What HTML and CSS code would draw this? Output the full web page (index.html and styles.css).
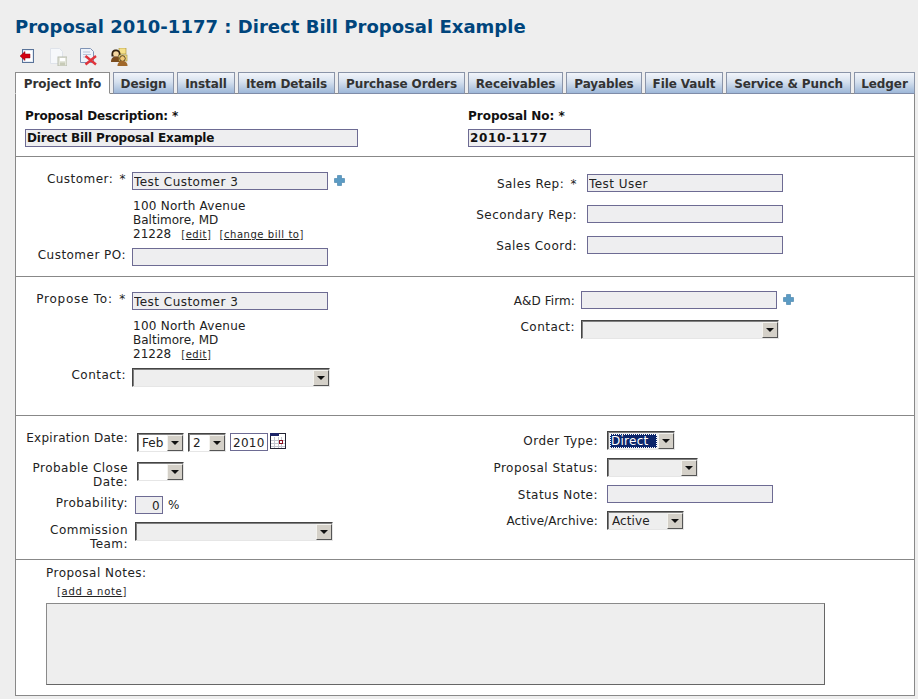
FILE: index.html
```html
<!DOCTYPE html>
<html lang="en">
<head>
<meta charset="utf-8">
<title>Proposal 2010-1177</title>
<link rel="stylesheet" href="styles.css">
</head>
<body>
<div class="page">
  <h1 class="title">Proposal 2010-1177 : Direct Bill Proposal Example</h1>
  <div class="toolbar">
    <svg class="tool tool-back" viewBox="0 0 16 16" width="16" height="16"><rect x="3.5" y="1.5" width="11" height="13" fill="#e4ecf6" stroke="#5a7398"/><rect x="5" y="3" width="8" height="10" fill="#fff"/><path d="M1 8l5-4.500V6h5v4H6v2.500z" fill="#d40010" stroke="#8a0010" stroke-width=".5"/></svg>
    <svg class="tool tool-save" viewBox="0 0 18 18" width="18" height="18"><path d="M1.500 .5h9l3 3v12h-12z" fill="#f6f8fb" stroke="#dfe3ea"/><rect x="9" y="9" width="9" height="9" fill="#e4e6dc" stroke="#b8bcae"/><rect x="11" y="10" width="5" height="3" fill="#fff"/><rect x="11" y="14.500" width="5" height="3" fill="#c8cbb8"/></svg>
    <svg class="tool tool-del" viewBox="0 0 18 18" width="18" height="18"><path d="M.5 .5h10l3 3v11h-13z" fill="#eef3fa" stroke="#7f93b5"/><path d="M3 4h7M3 6.500h8M3 9h5" stroke="#b9c4d8"/><path d="M5.500 8l10.500 8.500M16 8L5.500 16.500" stroke="#e0343c" stroke-width="2.400"/></svg>
    <svg class="tool tool-people" viewBox="0 0 18 18" width="18" height="18"><rect x="9" y="0" width="7" height="6" fill="#f5e08a" stroke="#a08a30" stroke-width=".6"/><path d="M1.500 8.500C1 3 3 1.500 6 1.500s5 2 4.500 7z" fill="#33220f"/><circle cx="6" cy="6" r="2.800" fill="#f5d7a0"/><path d="M1 14c0-4 2-5.500 5-5.500s5 1.500 5 5.500z" fill="#7a4c1e"/><rect x="9" y="7" width="8" height="6" fill="#f5e08a" stroke="#a08a30" stroke-width=".6"/><circle cx="12.500" cy="10.500" r="2.800" fill="#f0c878" stroke="#33220f" stroke-width=".8"/><path d="M7.500 18c0-3.500 2-5 5-5s5 1.500 5 5z" fill="#a0682a"/></svg>
  </div>

  <nav class="tabs">
    <a class="tab tab-active">Project Info</a>
    <a class="tab">Design</a>
    <a class="tab">Install</a>
    <a class="tab">Item Details</a>
    <a class="tab">Purchase Orders</a>
    <a class="tab">Receivables</a>
    <a class="tab">Payables</a>
    <a class="tab">File Vault</a>
    <a class="tab">Service &amp; Punch</a>
    <a class="tab">Ledger</a>
  </nav>

  <main class="panel">
    <section class="sec sec-head">
      <div class="head-field head-desc">
        <label class="head-label head-label-tight">Proposal Description: *</label>
        <input class="input input-bold w-desc" value="Direct Bill Proposal Example" readonly>
      </div>
      <div class="head-field">
        <label class="head-label">Proposal No: *</label>
        <input class="input input-bold input-num w-no" value="2010-1177" readonly>
      </div>
    </section>

    <section class="sec sec-customer">
      <div class="form form-a">
        <label class="label">Customer: <span class="star">*</span></label>
        <div class="ctrl"><input class="input w-196" value="Test Customer 3" readonly><svg class="plus" viewBox="0 0 11 11" width="11" height="11"><path d="M3.500 .5h4v3h3v4h-3v3h-4v-3h-3v-4h3z" fill="#5b9bc4" stroke="#3f7ea8" stroke-width=".6"/></svg></div>
        <div class="address col2"><span class="addr-first">100 North Avenue</span><br>Baltimore, MD<br>21228<span class="links"><span class="lnk">[<u>edit</u>]</span><span class="lnk">[<u>change bill to</u>]</span></span></div>
        <label class="label">Customer PO:</label>
        <div class="ctrl"><input class="input w-196" readonly></div>
      </div>
      <div class="form form-b">
        <label class="label label-mid">Sales Rep: <span class="star">*</span></label>
        <div class="ctrl"><input class="input w-196" value="Test User" readonly></div>
        <label class="label label-mid">Secondary Rep:</label>
        <div class="ctrl"><input class="input w-196" readonly></div>
        <label class="label label-mid">Sales Coord:</label>
        <div class="ctrl"><input class="input w-196" readonly></div>
      </div>
    </section>

    <section class="sec sec-propose">
      <div class="form form-a">
        <label class="label label-wide">Propose To: <span class="star">*</span></label>
        <div class="ctrl"><input class="input w-196" value="Test Customer 3" readonly></div>
        <div class="address col2"><span class="addr-first">100 North Avenue</span><br>Baltimore, MD<br>21228<span class="links"><span class="lnk">[<u>edit</u>]</span></span></div>
        <label class="label">Contact:</label>
        <div class="ctrl"><div class="select w-198"><span class="select-value"></span><span class="select-btn"></span></div></div>
      </div>
      <div class="form form-c">
        <label class="label label-firm label-tight">A&amp;D Firm:</label>
        <div class="ctrl"><input class="input w-196" readonly><svg class="plus" viewBox="0 0 11 11" width="11" height="11"><path d="M3.500 .5h4v3h3v4h-3v3h-4v-3h-3v-4h3z" fill="#5b9bc4" stroke="#3f7ea8" stroke-width=".6"/></svg></div>
        <label class="label">Contact:</label>
        <div class="ctrl"><div class="select w-198"><span class="select-value"></span><span class="select-btn"></span></div></div>
      </div>
    </section>

    <section class="sec sec-dates">
      <div class="form form-d">
        <label class="label label-date">Expiration Date:</label>
        <div class="ctrl ctrl-date">
          <div class="select select-white w-47"><span class="select-value">Feb</span><span class="select-btn"></span></div>
          <div class="select select-white w-38"><span class="select-value">2</span><span class="select-btn"></span></div>
          <input class="input input-year" value="2010" readonly>
          <svg class="cal" viewBox="0 0 16 16" width="16" height="16"><rect width="16" height="16" fill="#fff"/><path d="M.5 16V.5H16M.5 15.500H16M15.500 0v16" stroke="#223" fill="none"/><path d="M1 7.500h14M1 10.500h14M1 13.500h14M4.500 4v11M8.500 4v11M11.500 4v11" stroke="#c4c6d0"/><rect x="0" y="0" width="9" height="3" fill="#1c2468"/><rect x="9.500" y="7.500" width="3" height="3" fill="#fff" stroke="#8a1020"/></svg>
        </div>
        <label class="label">Probable Close Date:</label>
        <div class="ctrl ctrl-close"><div class="select select-white w-47"><span class="select-value"></span><span class="select-btn"></span></div></div>
        <label class="label">Probability:</label>
        <div class="ctrl ctrl-prob"><input class="input input-prob" value="0" readonly><span class="unit">%</span></div>
        <label class="label label-comm">Commission Team:</label>
        <div class="ctrl ctrl-comm"><div class="select w-198"><span class="select-value"></span><span class="select-btn"></span></div></div>
      </div>
      <div class="form form-e">
        <label class="label label-mid">Order Type:</label>
        <div class="ctrl"><div class="select w-68"><span class="select-value select-focus">Direct</span><span class="select-btn"></span></div></div>
        <label class="label label-mid">Proposal Status:</label>
        <div class="ctrl"><div class="select w-91"><span class="select-value"></span><span class="select-btn"></span></div></div>
        <label class="label label-mid">Status Note:</label>
        <div class="ctrl"><input class="input w-166" readonly></div>
        <label class="label label-mid label-tight">Active/Archive:</label>
        <div class="ctrl"><div class="select w-77"><span class="select-value">Active</span><span class="select-btn"></span></div></div>
      </div>
    </section>

    <section class="sec-notes">
      <label class="notes-label">Proposal Notes:</label>
      <div class="notes-link"><span class="lnk">[<u>add a note</u>]</span></div>
      <textarea class="notes-box" readonly></textarea>
    </section>
  </main>
</div>
</body>
</html>
```
FILE: styles.css
```css
* { box-sizing: border-box; }
html, body { margin: 0; padding: 0; }
body {
  background: #eeeeee;
  color: #222;
  font-family: "DejaVu Sans", Verdana, sans-serif;
  font-size: 12px;
  line-height: 14px;
  letter-spacing: .47px;
  overflow: hidden;
}
.page { width: 918px; height: 699px; padding: 16px 3px 0 15px; }
.title {
  margin: 0;
  font-size: 18px;
  line-height: 22px;
  font-weight: bold;
  letter-spacing: .02px;
  color: #00457c;
}
.toolbar { display: flex; align-items: flex-start; height: 18px; margin-top: 10px; padding-left: 4px; }
.tool-save { margin-left: 14px; }
.tool-del { margin-left: 13px; }
.tool-people { margin-left: 12px; }

.tabs {
  display: grid;
  grid-template-columns: 95px 61px 58px 97px 127px 95px 76px 78px 125px 61px;
  column-gap: 3px;
  height: 22px;
  margin-top: 6px;
  margin-bottom: -1px;
}
.tab {
  display: block;
  height: 22px;
  padding-top: 4px;
  text-align: center;
  font-weight: bold;
  font-size: 12px;
  line-height: 14px;
  letter-spacing: -.1px;
  color: #333;
  white-space: nowrap;
  border: 1px solid #8a94a8;
  border-bottom-color: #7f8ca8;
  background: linear-gradient(#f2f5fa, #d5e0ee 45%, #9db7d8);
}
.tab-active {
  position: relative;
  background: #fff;
  border-color: #8c8c8c;
  border-bottom-color: #fff;
}

.panel { width: 900px; height: 603px; background: #fff; border: 1px solid #888; }
.sec { border-bottom: 1px solid #888; display: flex; }
.sec-head { height: 63px; padding: 15px 0 0 9px; }
.sec-customer { height: 120px; }
.sec-propose { height: 139px; }
.sec-dates { height: 144px; }

.head-field { display: flex; flex-direction: column; align-items: flex-start; gap: 6px; }
.head-desc { width: 443px; }
.head-label { font-weight: bold; color: #111; line-height: 14px; letter-spacing: 0; }
.head-label-tight { letter-spacing: -.13px; }

.input {
  display: block;
  height: 18px;
  padding: 1px 1px 0;
  border: 1px solid #6d6b93;
  background: #eeeef0;
  font: 12px/16px "DejaVu Sans", Verdana, sans-serif;
  letter-spacing: .47px;
  color: #222;
}
.input-bold { font-weight: bold; color: #111; letter-spacing: -.15px; padding-top: 0; }
.input-num { letter-spacing: .65px; }
.w-desc { width: 333px; }
.w-no { width: 123px; }
.w-196 { width: 196px; }
.w-166 { width: 166px; }
.w-198 { width: 198px; }
.w-47 { width: 47px; }
.w-38 { width: 38px; }
.w-68 { width: 68px; }
.w-91 { width: 91px; }
.w-77 { width: 77px; }

.form { display: grid; align-content: start; justify-items: start; }
.form-a { width: 457px; grid-template-columns: 110px auto; column-gap: 6px; row-gap: 8px; padding-top: 15px; }
.form-b { grid-template-columns: 104px auto; column-gap: 10px; row-gap: 13px; padding-top: 17px; }
.form-c { grid-template-columns: 102px auto; column-gap: 6px; row-gap: 11px; padding-top: 14px; }
.form-d { width: 457px; grid-template-columns: 112px auto; column-gap: 9px; row-gap: 7px; padding-top: 15px; }
.form-e { grid-template-columns: 125px auto; column-gap: 9px; row-gap: 8px; padding-top: 15px; }

.label { justify-self: end; text-align: right; color: #222; }
.star { margin-left: 2px; }
.label-mid { align-self: center; padding-top: 2px; }
.form-e .label-mid { padding-top: 1px; }
.label-firm { padding-top: 3px; }
.label-comm { margin-top: 2px; }
.label-wide { letter-spacing: .75px; }
.label-tight { letter-spacing: .1px; }
.label-date { letter-spacing: .27px; }
.ctrl { display: flex; align-items: flex-start; }
.col2 { grid-column: 2; }
.plus { margin: 3px 0 0 6px; }

.address { margin-top: 1px; margin-bottom: -2px; padding-left: 1px; letter-spacing: 0; }
.addr-first { letter-spacing: .25px; }
.links { margin-left: 10px; font-size: 10px; letter-spacing: .55px; }
.lnk { margin-right: 8px; color: #333; }
.lnk u { color: #222; }

.select {
  display: flex;
  height: 19px;
  padding: 1px 0 0 1px;
  background: #eeeeee;
  border: 1px solid;
  border-color: #444 #e6e6e6 #e6e6e6 #444;
  box-shadow: inset 1px 1px 0 #808080;
}
.select-white { background: #fff; }
.select-value { flex: 1; padding: 1px 3px 0; line-height: 14px; font-size: 12px; letter-spacing: .1px; white-space: nowrap; overflow: hidden; color: #222; }
.select-focus { background: #0a246a; color: #fff; outline: 1px dotted #fff; outline-offset: -1px; margin: 1px; padding: 0 0 0 1px; letter-spacing: .25px; }
.select-btn {
  position: relative;
  flex: none;
  width: 16px;
  height: 16px;
  background: #d4d0c8;
  border: 1px solid;
  border-color: #f4f3ef #555 #555 #f4f3ef;
}
.select-btn::after {
  content: "";
  position: absolute;
  left: 3px;
  top: 5px;
  border: 4px solid transparent;
  border-top-color: #111;
  border-bottom: 0;
}

.ctrl-date { padding-top: 2px; gap: 4px; min-height: 23px; }
.ctrl-close { padding-top: 1px; }
.ctrl-prob { margin-left: -2px; }
.ctrl-comm { margin-left: -2px; margin-top: 1px; }
.input-year { width: 38px; background: #fff; letter-spacing: .3px; padding: 1px 2px 0; }
.cal { margin-left: -2px; }
.input-prob { width: 28px; text-align: right; padding-right: 2px; }
.unit { margin: 2px 0 0 5px; letter-spacing: 0; }

.sec-notes { height: 135px; padding: 6px 0 0 30px; }
.notes-label { display: block; }
.notes-link { margin: 5px 0 0 11px; font-size: 10px; letter-spacing: .7px; }
.notes-box {
  display: block;
  width: 779px;
  height: 82px;
  margin-top: 4px;
  padding: 0;
  resize: none;
  background: #eeeeee;
  border: 1px solid;
  border-color: #8a8a8a #666 #666 #8a8a8a;
}
```
